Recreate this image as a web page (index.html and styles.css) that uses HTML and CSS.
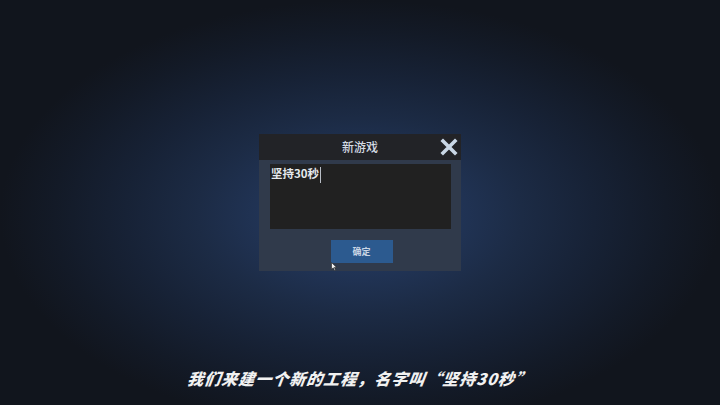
FILE: index.html
```html
<!DOCTYPE html>
<html lang="zh">
<head>
<meta charset="utf-8">
<title>新游戏</title>
<link rel="stylesheet" href="styles.css">
</head>
<body>
<main class="stage">
  <section class="dialog">
    <header class="dialog-head">
      <h1 class="dialog-title">新游戏</h1>
      <button class="close-btn" aria-label="关闭">
        <svg viewBox="0 0 18 18" width="18" height="18">
          <path d="M3 3 L15 15 M15 3 L3 15" stroke="#c9d7e6" stroke-width="3.6" stroke-linecap="square" fill="none"/>
        </svg>
      </button>
    </header>
    <div class="dialog-body">
      <div class="name-field"><span class="name-text">坚持30秒</span><span class="caret"></span></div>
      <div class="actions">
        <button class="ok-btn">确定</button>
        <svg class="pointer" viewBox="0 0 6 9" width="6" height="9">
          <path d="M0.5 0.5 L0.5 7.5 L2.2 5.8 L3.6 8.5 L4.6 8 L3.3 5.4 L5.6 5.4 Z" fill="#f2f2f2" stroke="#222" stroke-width="0.6"/>
        </svg>
      </div>
    </div>
  </section>
  <p class="caption">我们来建一个新的工程，名字叫“坚持30秒”</p>
</main>
</body>
</html>
```
FILE: styles.css
```css
* { box-sizing: border-box; }

html, body {
  margin: 0;
  height: 100%;
}

body {
  font-family: "Noto Sans CJK SC", "Noto Sans", sans-serif;
  background: #0f131a;
  overflow: hidden;
}

.stage {
  position: relative;
  width: 720px;
  height: 405px;
  display: flex;
  align-items: center;
  justify-content: center;
  background: radial-gradient(ellipse 360px 215px at 360px 215px,
    #253a5e 0%, #22365a 22%, #1c2b45 45%, #172236 65%, #131a27 85%, #11151d 100%);
}

.dialog {
  width: 202px;
  height: 137px;
  display: flex;
  flex-direction: column;
  background: #303a4b;
}

.dialog-head {
  position: relative;
  height: 26px;
  display: flex;
  align-items: center;
  justify-content: center;
  background: #222327;
}

.dialog-title {
  margin: 0;
  font-size: 12px;
  font-weight: 500;
  color: #d3dae3;
  line-height: 1;
}

.close-btn {
  position: absolute;
  right: 3px;
  top: 4px;
  width: 18px;
  height: 18px;
  padding: 0;
  border: 0;
  background: none;
  display: block;
}

.close-btn svg { display: block; }

.dialog-body {
  flex: 1;
  display: flex;
  flex-direction: column;
  padding: 4px 10px 8px 11px;
  gap: 11px;
}

.name-field {
  height: 65px;
  background: #212121;
  display: flex;
  align-items: flex-start;
  padding: 1px 1px;
}

.name-text {
  font-size: 11.5px;
  font-weight: 700;
  color: #e6eaee;
  line-height: 16px;
}

.caret {
  width: 1px;
  height: 16px;
  margin-left: 1px;
  margin-top: 2px;
  background: #b8bec6;
}

.actions {
  position: relative;
  display: flex;
  justify-content: center;
}

.ok-btn {
  width: 62px;
  height: 23px;
  margin-left: 2px;
  border: 0;
  padding: 0;
  background: #2c5a8f;
  color: #c9d5e4;
  font-family: "Noto Sans CJK SC", sans-serif;
  font-size: 9px;
  font-weight: 700;
}

.pointer {
  position: absolute;
  left: 61px;
  top: 22px;
}

.caption {
  position: absolute;
  left: 0;
  right: 0;
  bottom: 17px;
  margin: 0;
  text-align: center;
  font-size: 16px;
  font-weight: 900;
  font-style: italic;
  color: #f1f1f1;
  letter-spacing: 1px;
  transform: skewX(-8deg);
  line-height: 20px;
}
```
